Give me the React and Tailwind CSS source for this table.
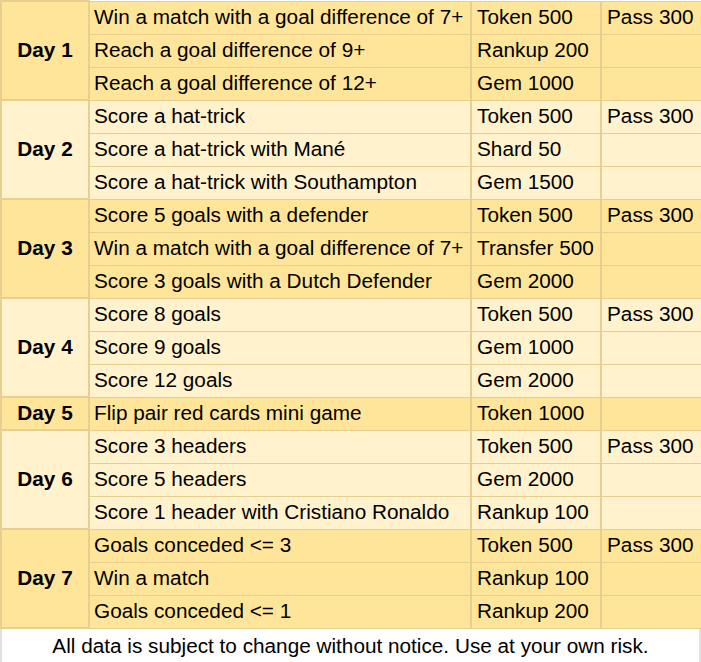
const days = [
  {
    day: 'Day 1',
    tone: 'dark',
    rows: [
      ['Win a match with a goal difference of 7+', 'Token 500', 'Pass 300'],
      ['Reach a goal difference of 9+', 'Rankup 200', ''],
      ['Reach a goal difference of 12+', 'Gem 1000', ''],
    ],
  },
  {
    day: 'Day 2',
    tone: 'light',
    rows: [
      ['Score a hat-trick', 'Token 500', 'Pass 300'],
      ['Score a hat-trick with Mané', 'Shard 50', ''],
      ['Score a hat-trick with Southampton', 'Gem 1500', ''],
    ],
  },
  {
    day: 'Day 3',
    tone: 'dark',
    rows: [
      ['Score 5 goals with a defender', 'Token 500', 'Pass 300'],
      ['Win a match with a goal difference of 7+', 'Transfer 500', ''],
      ['Score 3 goals with a Dutch Defender', 'Gem 2000', ''],
    ],
  },
  {
    day: 'Day 4',
    tone: 'light',
    rows: [
      ['Score 8 goals', 'Token 500', 'Pass 300'],
      ['Score 9 goals', 'Gem 1000', ''],
      ['Score 12 goals', 'Gem 2000', ''],
    ],
  },
  {
    day: 'Day 5',
    tone: 'dark',
    rows: [['Flip pair red cards mini game', 'Token 1000', '']],
  },
  {
    day: 'Day 6',
    tone: 'light',
    rows: [
      ['Score 3 headers', 'Token 500', 'Pass 300'],
      ['Score 5 headers', 'Gem 2000', ''],
      ['Score 1 header with Cristiano Ronaldo', 'Rankup 100', ''],
    ],
  },
  {
    day: 'Day 7',
    tone: 'dark',
    rows: [
      ['Goals conceded <= 3', 'Token 500', 'Pass 300'],
      ['Win a match', 'Rankup 100', ''],
      ['Goals conceded <= 1', 'Rankup 200', ''],
    ],
  },
]

export default function App() {
  return (
    <div className="w-[701px] bg-white text-black" style={{ fontFamily: '"Liberation Sans", Arial, sans-serif' }}>
      <table className="w-[701px] table-fixed border-collapse text-[20.75px] leading-none">
        <colgroup>
          <col className="w-[88px]" />
          <col className="w-[382px]" />
          <col className="w-[130px]" />
          <col className="w-[101px]" />
        </colgroup>
        <tbody>
          {days.map((d) => {
            const bg = d.tone === 'dark' ? 'bg-[#ffe599]' : 'bg-[#fff2cc]'
            return d.rows.map((r, i) => (
              <tr key={d.day + i} className={`h-[33px] ${bg}`}>
                {i === 0 && (
                  <td rowSpan={d.rows.length} className="border-2 border-[#e6cf8f] text-center font-bold">
                    {d.day}
                  </td>
                )}
                <td className="border-x-2 border-y border-[#e6cf8f] pl-[4px] whitespace-nowrap">{r[0]}</td>
                <td className="border-x-2 border-y border-[#e6cf8f] pl-[5px] whitespace-nowrap">{r[1]}</td>
                <td className="border-x-2 border-y border-[#e6cf8f] pl-[5px] whitespace-nowrap">{r[2]}</td>
              </tr>
            ))
          })}
        </tbody>
      </table>
      <div className="h-[35px] border-x-2 border-b-2 border-[#e0e0e0] flex items-center justify-center text-[20.75px]">
        All data is subject to change without notice. Use at your own risk.
      </div>
    </div>
  )
}
